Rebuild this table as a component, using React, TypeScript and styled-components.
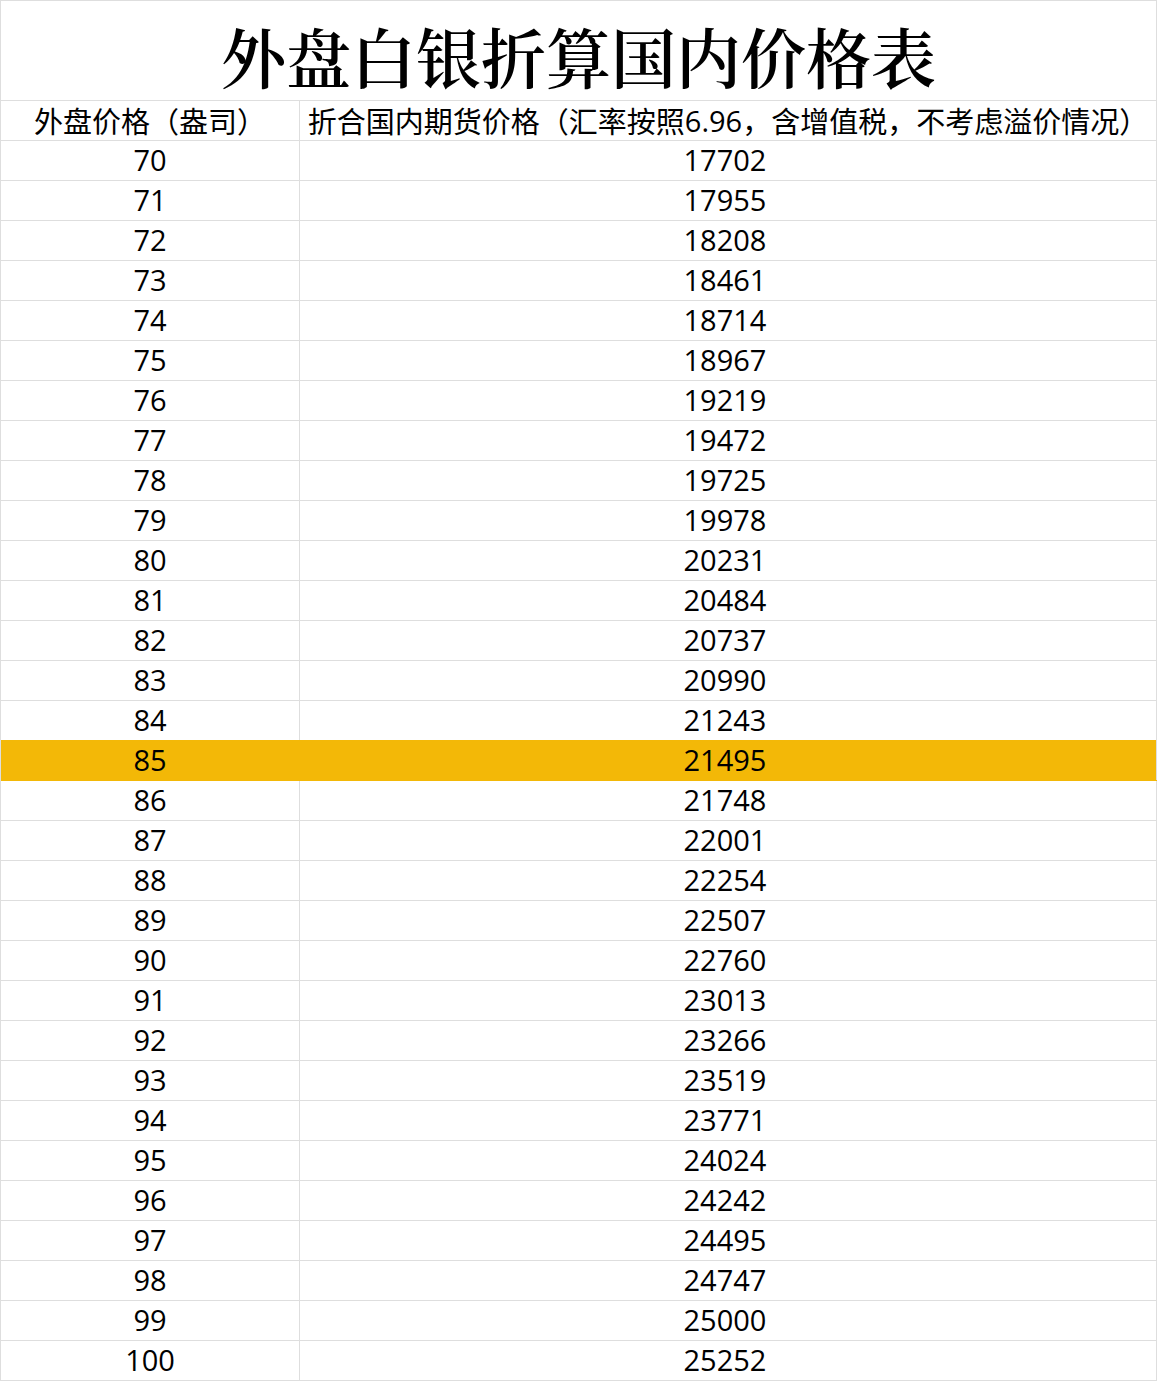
import styled, { createGlobalStyle } from 'styled-components';

const rate = [
  17702, 17955, 18208, 18461, 18714, 18967, 19219, 19472, 19725, 19978, 20231,
  20484, 20737, 20990, 21243, 21495, 21748, 22001, 22254, 22507, 22760, 23013,
  23266, 23519, 23771, 24024, 24242, 24495, 24747, 25000, 25252,
];

const GlobalStyle = createGlobalStyle`
  html, body {
    margin: 0;
    padding: 0;
    background: #ffffff;
  }
  body {
    font-family: "Open Sans", "Noto Sans CJK SC", sans-serif;
    color: #000;
  }
`;

const Sheet = styled.div`
  width: 1157px;
  box-sizing: border-box;
  border-left: 1px solid #dedede;
  border-top: 1px solid #dedede;
`;

const Title = styled.h1`
  margin: 0;
  height: 100px;
  box-sizing: border-box;
  border-right: 1px solid #dedede;
  border-bottom: 1px solid #dedede;
  display: flex;
  align-items: center;
  justify-content: center;
  font-family: "Noto Serif CJK SC", "Noto Sans CJK SC", serif;
  font-size: 65px;
  font-weight: 600;
  line-height: 1;
  padding-top: 10px;
`;

const Row = styled.div<{ $hl?: boolean }>`
  display: grid;
  grid-template-columns: 299px 1fr;
  box-sizing: border-box;
  border-bottom: 1px solid ${(p) => (p.$hl ? '#f3b807' : '#dedede')};
  background: ${(p) => (p.$hl ? '#f3b807' : 'transparent')};
  margin-top: ${(p) => (p.$hl ? '-1px' : '0')};
  height: ${(p) => (p.$hl ? '41px' : '40px')};
`;

const Cell = styled.div<{ $hl?: boolean }>`
  display: flex;
  align-items: center;
  justify-content: center;
  white-space: nowrap;
  font-size: 29px;
  line-height: 1;
  padding-bottom: 2px;
  border-right: 1px solid ${(p) => (p.$hl ? '#f3b807' : '#dedede')};
  &:last-child {
    border-right-color: #dedede;
    padding-right: 6px;
  }
`;

const HeadCell = styled(Cell)`
  font-family: "Noto Sans CJK SC", sans-serif;
  padding-bottom: 0;
  &:last-child {
    padding-right: 0;
  }
  & span {
    font-family: "Open Sans", sans-serif;
  }
`;

const App = (): JSX.Element => {
  return (
    <>
      <GlobalStyle />
      <Sheet>
        <Title>外盘白银折算国内价格表</Title>
        <Row>
          <HeadCell>外盘价格（盎司）</HeadCell>
          <HeadCell>
            折合国内期货价格（汇率按照<span>6.96</span>，含增值税，不考虑溢价情况）
          </HeadCell>
        </Row>
        {rate.map((price, idx) => {
          const oz = 70 + idx;
          const hl = oz === 85;
          return (
            <Row key={oz} $hl={hl}>
              <Cell $hl={hl}>{oz}</Cell>
              <Cell $hl={hl}>{price}</Cell>
            </Row>
          );
        })}
      </Sheet>
    </>
  );
};

export default App;
